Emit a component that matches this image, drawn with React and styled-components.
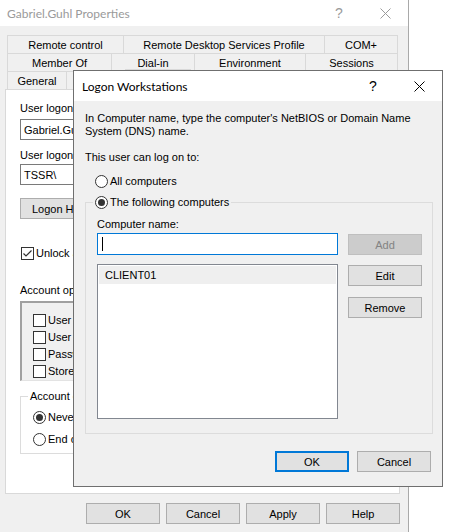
import React from 'react';
import styled, { createGlobalStyle } from 'styled-components';

const GlobalStyle = createGlobalStyle`
  html, body { margin: 0; padding: 0; background: #ffffff; }
  body {
    font-family: "Liberation Sans", Arial, sans-serif;
    font-size: 11px;
    color: #000;
  }
  * { box-sizing: border-box; }
`;

const Page = styled.div`
  position: relative;
  width: 452px;
  height: 532px;
  overflow: hidden;
  background: #fff;
`;

const Window = styled.div`
  width: 409px;
  height: 532px;
  background: #f0f0f0;
  border-right: 1px solid #a9a9a9;
  display: flex;
  flex-direction: column;
`;

const TitleBar = styled.div`
  height: ${p => p.$h}px;
  flex-shrink: 0;
  background: #fff;
  display: flex;
  align-items: stretch;
  padding-left: ${p => p.$pad}px;
`;

const TitleText = styled.div`
  flex: 1;
  display: flex;
  align-items: center;
  font-family: "Lato", "Liberation Sans", sans-serif;
  font-size: 12px;
  color: ${p => (p.$inactive ? '#9a9a9a' : '#000')};
`;

const CaptionButton = styled.div`
  width: 46px;
  display: flex;
  align-items: center;
  justify-content: center;
  font-family: "Liberation Sans", sans-serif;
  font-size: 14px;
  color: ${p => (p.$inactive ? '#9a9a9a' : '#000')};
`;

const TabStrip = styled.div`
  margin: 9px 0 0 7px;
  width: 391px;
  display: flex;
  flex-direction: column;
`;

const TabRow = styled.div`
  display: flex;
  height: 18px;
`;

const Tab = styled.div`
  width: ${p => p.$w}px;
  flex-shrink: 0;
  height: ${p => (p.$selected ? 20 : 18)}px;
  margin-top: ${p => (p.$selected ? -2 : 0)}px;
  background: ${p => (p.$selected ? '#fff' : '#f0f0f0')};
  border-top: 1px solid #d9d9d9;
  border-left: 1px solid #d9d9d9;
  border-right: ${p => (p.$last ? '1px solid #d9d9d9' : 'none')};
  display: flex;
  align-items: center;
  justify-content: center;
  white-space: nowrap;
  overflow: hidden;
`;

const Panel = styled.div`
  margin-left: 5px;
  width: 395px;
  height: 405px;
  background: #fff;
  border: 1px solid #d9d9d9;
  padding: 12px 0 0 14px;
  display: flex;
  flex-direction: column;
  align-items: flex-start;
`;

const Label = styled.div`
  line-height: 13px;
  height: 13px;
  white-space: nowrap;
  margin-top: ${p => p.$mt || 0}px;
`;

const TextBox = styled.div`
  width: ${p => p.$w}px;
  height: ${p => p.$h || 21}px;
  margin-top: ${p => p.$mt || 0}px;
  background: #fff;
  border: 1px solid ${p => (p.$focus ? '#0078d7' : '#7a7a7a')};
  display: flex;
  align-items: center;
  padding-left: 3px;
  white-space: nowrap;
  overflow: hidden;
`;

const FieldRow = styled.div`
  display: flex;
  gap: 4px;
  margin-top: ${p => p.$mt || 0}px;
`;

const Caret = styled.span`
  display: inline-block;
  width: 1px;
  height: 14px;
  background: #000;
  margin-left: 1px;
`;

const Button = styled.div`
  width: ${p => p.$w || 74}px;
  height: 21px;
  flex-shrink: 0;
  background: ${p => (p.$disabled ? '#cccccc' : '#e1e1e1')};
  border: ${p => (p.$default ? '2px solid #0078d7' : p.$disabled ? '1px solid #bfbfbf' : '1px solid #adadad')};
  color: ${p => (p.$disabled ? '#838383' : '#000')};
  display: flex;
  align-items: center;
  justify-content: center;
  white-space: nowrap;
  margin-top: ${p => p.$mt || 0}px;
`;

const CheckRow = styled.div`
  display: flex;
  align-items: center;
  gap: 2px;
  height: 13px;
  margin-top: ${p => p.$mt || 0}px;
  margin-left: ${p => p.$ml || 0}px;
  white-space: nowrap;
  line-height: 13px;
`;

const CheckBox = styled.span`
  width: 13px;
  height: 13px;
  flex-shrink: 0;
  border: 1px solid #333;
  background: #fff;
  display: flex;
  align-items: center;
  justify-content: center;
`;

const Radio = styled.span`
  width: 13px;
  height: 13px;
  flex-shrink: 0;
  border-radius: 50%;
  border: 1px solid #333;
  background: #fff;
  display: flex;
  align-items: center;
  justify-content: center;
  &::after {
    content: '';
    display: ${p => (p.$checked ? 'block' : 'none')};
    width: 7px;
    height: 7px;
    border-radius: 50%;
    background: #333;
  }
`;

const OptionList = styled.div`
  width: 370px;
  height: 80px;
  margin-top: 4px;
  background: #f0f0f0;
  border-top: 2px solid #a0a0a0;
  border-left: 2px solid #a0a0a0;
  border-right: 1px solid #e3e3e3;
  border-bottom: 1px solid #e3e3e3;
  padding: 11px 0 0 11px;
  display: flex;
  flex-direction: column;
  gap: 4px;
`;

const Group = styled.fieldset`
  margin: ${p => p.$mt || 0}px 0 0 0;
  padding: 0;
  min-width: 0;
  width: ${p => p.$w}px;
  height: ${p => p.$h}px;
  border: 1px solid #dcdcdc;
`;

const Legend = styled.legend`
  margin-left: ${p => p.$ml || 7}px;
  padding: 0 2px;
  line-height: 13px;
  height: 13px;
`;

const LegendContent = styled.div`
  display: flex;
  align-items: center;
  gap: 2px;
  white-space: nowrap;
`;

const GroupInner = styled.div`
  padding: ${p => p.$pad};
  display: flex;
  flex-direction: column;
  gap: ${p => p.$gap || 0}px;
`;

const ButtonBar = styled.div`
  display: flex;
  justify-content: flex-end;
  gap: 6px;
  margin-top: 9px;
  padding-right: 8px;
`;

/* Logon Workstations dialog (overlays the Properties window) */
const Dialog = styled.div`
  position: absolute;
  left: 73px;
  top: 70px;
  width: 370px;
  height: 417px;
  background: #f0f0f0;
  border: 1px solid #6f6f6f;
  display: flex;
  flex-direction: column;
`;

const DialogBody = styled.div`
  padding: 11px 9px 0 11px;
  display: flex;
  flex-direction: column;
  align-items: flex-start;
`;

const Intro = styled.p`
  margin: 0;
  line-height: 13px;
  width: 340px;
`;

const GroupGrid = styled.div`
  display: grid;
  grid-template-columns: 241px 74px;
  column-gap: 10px;
  padding: 9px 10px 14px 11px;
`;

const LeftCol = styled.div`
  display: flex;
  flex-direction: column;
`;

const RightCol = styled.div`
  display: flex;
  flex-direction: column;
  padding-top: 16px;
`;

const ListBox = styled.div`
  margin-top: 9px;
  width: 241px;
  height: 155px;
  background: #fff;
  border: 1px solid #828790;
  padding: 1px;
`;

const ListItem = styled.div`
  height: 18px;
  background: #efefef;
  padding-left: 6px;
  display: flex;
  align-items: center;
`;

const DialogFooter = styled.div`
  align-self: flex-end;
  display: flex;
  gap: 8px;
  margin-top: 17px;
  margin-right: 2px;
`;

const CloseGlyph = ({ color }) => (
  <svg width="11" height="11" viewBox="0 0 11 11">
    <path d="M0.5 0.5 L10.5 10.5 M10.5 0.5 L0.5 10.5" stroke={color} strokeWidth="1" fill="none" />
  </svg>
);

const CheckGlyph = () => (
  <svg width="11" height="11" viewBox="0 0 11 11">
    <path d="M1.5 5.5 L4 8 L9.5 2.5" stroke="#333" strokeWidth="1.2" fill="none" />
  </svg>
);

export default function App() {
  return (
    <Page>
      <GlobalStyle />
      <Window>
        <TitleBar $h={26} $pad={7}>
          <TitleText $inactive>Gabriel.Guhl Properties</TitleText>
          <CaptionButton $inactive>?</CaptionButton>
          <CaptionButton $inactive>
            <CloseGlyph color="#9a9a9a" />
          </CaptionButton>
        </TitleBar>

        <TabStrip>
          <TabRow>
            <Tab $w={116}>Remote control</Tab>
            <Tab $w={201}>Remote Desktop Services Profile</Tab>
            <Tab $w={74} $last>COM+</Tab>
          </TabRow>
          <TabRow>
            <Tab $w={104}>Member Of</Tab>
            <Tab $w={83}>Dial-in</Tab>
            <Tab $w={111}>Environment</Tab>
            <Tab $w={93} $last>Sessions</Tab>
          </TabRow>
          <TabRow>
            <Tab $w={59}>General</Tab>
            <Tab $w={59}>Address</Tab>
            <Tab $w={66} $selected>Account</Tab>
            <Tab $w={60}>Profile</Tab>
            <Tab $w={70}>Telephones</Tab>
            <Tab $w={77} $last>Organization</Tab>
          </TabRow>
        </TabStrip>

        <Panel>
          <Label>User logon name:</Label>
          <FieldRow $mt={4}>
            <TextBox $w={180}>Gabriel.Guhl</TextBox>
            <TextBox $w={180}>@tssr.local</TextBox>
          </FieldRow>
          <Label $mt={9}>User logon name (pre-Windows 2000):</Label>
          <FieldRow $mt={2}>
            <TextBox $w={180}>TSSR\</TextBox>
            <TextBox $w={180}>Gabriel.Guhl</TextBox>
          </FieldRow>
          <FieldRow $mt={13}>
            <Button $w={96}>Logon Hours...</Button>
            <Button $w={96}>Log On To...</Button>
          </FieldRow>
          <CheckRow $mt={28} $ml={1}>
            <CheckBox><CheckGlyph /></CheckBox>
            <span>Unlock account</span>
          </CheckRow>
          <Label $mt={24}>Account options:</Label>
          <OptionList>
            <CheckRow><CheckBox /><span>User must change password at next logon</span></CheckRow>
            <CheckRow><CheckBox /><span>User cannot change password</span></CheckRow>
            <CheckRow><CheckBox /><span>Password never expires</span></CheckRow>
            <CheckRow><CheckBox /><span>Store password using reversible encryption</span></CheckRow>
          </OptionList>
          <Group $mt={9} $w={370} $h={64}>
            <Legend $ml={7}>Account expires</Legend>
            <GroupInner $pad="8px 0 0 12px" $gap={9}>
              <CheckRow>
                <Radio $checked />
                <span>Never</span>
              </CheckRow>
              <CheckRow>
                <Radio />
                <span>End of:</span>
              </CheckRow>
            </GroupInner>
          </Group>
        </Panel>

        <ButtonBar>
          <Button>OK</Button>
          <Button>Cancel</Button>
          <Button>Apply</Button>
          <Button>Help</Button>
        </ButtonBar>
      </Window>

      <Dialog>
        <TitleBar $h={30} $pad={8}>
          <TitleText>Logon Workstations</TitleText>
          <CaptionButton>?</CaptionButton>
          <CaptionButton>
            <CloseGlyph color="#000" />
          </CaptionButton>
        </TitleBar>
        <DialogBody>
          <Intro>
            In Computer name, type the computer's NetBIOS or Domain Name System (DNS) name.
          </Intro>
          <Label $mt={13}>This user can log on to:</Label>
          <CheckRow $mt={11} $ml={10}>
            <Radio />
            <span>All computers</span>
          </CheckRow>
          <Group $mt={8} $w={348} $h={238}>
            <Legend $ml={7}>
              <LegendContent>
                <Radio $checked />
                <span>The following computers</span>
              </LegendContent>
            </Legend>
            <GroupGrid>
              <LeftCol>
                <Label>Computer name:</Label>
                <TextBox $w={241} $h={22} $mt={2} $focus>
                  <Caret />
                </TextBox>
                <ListBox>
                  <ListItem>CLIENT01</ListItem>
                </ListBox>
              </LeftCol>
              <RightCol>
                <Button $disabled>Add</Button>
                <Button $mt={10}>Edit</Button>
                <Button $mt={11}>Remove</Button>
              </RightCol>
            </GroupGrid>
          </Group>
          <DialogFooter>
            <Button $default>OK</Button>
            <Button>Cancel</Button>
          </DialogFooter>
        </DialogBody>
      </Dialog>
    </Page>
  );
}
